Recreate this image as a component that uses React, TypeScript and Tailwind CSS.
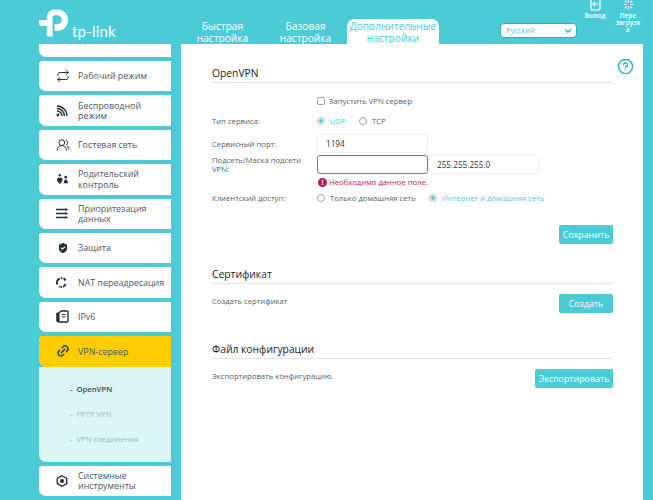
import React from "react";
import { CircleHelp, ChevronDown, Repeat, UsersRound, ShieldCheck, Link2 } from "lucide-react";

const Txt = "font-['Open_Sans',sans-serif]";

function Logo() {
  return (
    <div className="flex items-start ml-[39px] mt-[8px] w-[120px]">
      <svg width="33" height="30" viewBox="0 0 34 30" className="shrink-0">
        <path d="M8 12 V9 A8 8 0 0 1 16 1 H19 A11 11 0 0 1 19 23 H16 V16 H19 A4.5 4.5 0 0 0 19 7 H16 A2 2 0 0 0 14 9 V29 H9 A1 1 0 0 1 8 28 V18 H3 A3 3 0 0 1 0 15 V12 Z" fill="#fff" />
      </svg>
      <span className="font-['Lato',sans-serif] text-white text-[15px] leading-[20px] mt-[13px] tracking-[0.2px]">tp-link</span>
    </div>
  );
}

function Tab({ a, b, active, w }: { a: string; b: string; active?: boolean; w: string }) {
  return (
    <div className={`${w} h-[25px] text-center ${Txt} text-[10.2px] leading-[12px] pt-[1px] rounded-t-[8px] ${active ? "bg-white text-[#4acbd6]" : "text-white"}`}>
      <div>{a}</div>
      <div>{b}</div>
    </div>
  );
}

function Header() {
  return (
    <div className="flex h-[44px] relative">
      <div className="w-[181px] shrink-0"><Logo /></div>
      <div className="flex items-end w-[258px] shrink-0">
        <Tab a="Быстрая" b="настройка" w="w-[83px]" />
        <Tab a="Базовая" b="настройка" w="w-[83px]" />
        <Tab a="Дополнительные" b="настройки" w="w-[92px]" active />
      </div>
      <div className={`ml-[61px] mt-[23px] w-[77px] h-[15px] bg-white border border-[#26b4c1] rounded-[4px] flex items-center justify-between pl-[5px] pr-[3px] text-[7.5px] text-[#4acbd6] ${Txt}`}>
        <span>Русский</span>
        <ChevronDown size={10} strokeWidth={3} className="text-[#26b4c1]" />
      </div>
      <div className={`w-[24px] ml-[6px] text-white font-semibold text-[6.5px] leading-[7px] text-center ${Txt}`}>
        <svg width="12" height="11" viewBox="0 0 12 11" className="mx-auto">
          <path d="M2 0 V8 Q2 10 4 10 H9 Q11 10 11 8 V0" fill="none" stroke="#fff" strokeWidth="1.2" />
          <path d="M9 4 H4 M6 2 L4 4 L6 6" fill="none" stroke="#fff" strokeWidth="1.2" />
        </svg>
        <div className="mt-[1px]">Выход</div>
      </div>
      <div className={`w-[28px] ml-[7px] text-white font-semibold text-[6.5px] leading-[7px] text-center ${Txt}`}>
        <svg width="13" height="11" viewBox="0 0 12 11" className="mx-auto">
          <path d="M6 0 V2.5 M6 6.5 V9 M1.5 4.5 H4 M8 4.5 H10.5 M2.5 1 L4.2 2.7 M9.5 1 L7.8 2.7 M2.5 8 L4.2 6.3 M9.5 8 L7.8 6.3" stroke="#fff" strokeWidth="1.2" />
        </svg>
        <div className="mt-[1px]">Пере</div>
        <div>загрузк</div>
        <div>а</div>
      </div>
    </div>
  );
}

function Card({ icon, text, active }: { icon: React.ReactNode; text: React.ReactNode; active?: boolean }) {
  return (
    <div className={`h-[30.4px] shrink-0 flex items-center rounded-bl-[7px] rounded-tl-[3px] ${active ? "bg-[#ffcc00]" : "bg-white"}`}>
      <div className="w-[39px] pl-[17px] shrink-0 text-[#2c3a44]">{icon}</div>
      <div className={`text-[8.9px] leading-[10.5px] pt-[1px] text-[#4a5860] ${Txt}`}>{text}</div>
    </div>
  );
}

function Wifi() {
  return (
    <svg width="12" height="12" viewBox="0 0 12 12" fill="none">
      <circle cx="2" cy="10" r="1.4" fill="#22303a" />
      <path d="M1 6 A5 5 0 0 1 6 11 M1 3.5 A7.5 7.5 0 0 1 8.5 11 M1 1 A10 10 0 0 1 11 11" stroke="#22303a" strokeWidth="1.4" />
    </svg>
  );
}

function Parent() {
  return (
    <svg width="13" height="11" viewBox="0 0 14 12">
      <path d="M4 2 C5 0.5 7.5 1.5 7 4 C6.7 5.8 5 7.5 4 8.5 C3 7.5 1.3 5.8 1 4 C0.5 1.5 3 0.5 4 2Z" transform="translate(0 2.5)" fill="#22303a" />
      <circle cx="4" cy="1.3" r="1.3" fill="#22303a" />
      <circle cx="10.5" cy="3.5" r="1.5" fill="#22303a" />
      <path d="M8 10 L9.5 6 H11.5 L13.5 10Z" fill="#22303a" />
    </svg>
  );
}

function Qos() {
  return (
    <svg width="12" height="11" viewBox="0 0 12 11">
      <path d="M0 1.5 H10 M0 5.5 H10 M0 9.5 H10" stroke="#22303a" strokeWidth="1.6" />
      <path d="M9.5 0 L12 1.5 L9.5 3Z M9.5 4 L12 5.5 L9.5 7Z M9.5 8 L12 9.5 L9.5 11Z" fill="#22303a" />
    </svg>
  );
}

function Nat() {
  return (
    <svg width="11" height="11" viewBox="0 0 11 11" fill="none">
      <path d="M1.5 7.5 A4.5 4.5 0 0 1 3.5 1.5 M7.5 1.4 A4.5 4.5 0 0 1 9.5 3.5 M9.6 7 A4.5 4.5 0 0 1 7 9.7 M3.8 9.8 L3 9.3" stroke="#22303a" strokeWidth="2" />
      <circle cx="5.5" cy="1" r="1" fill="#22303a" />
      <circle cx="5.3" cy="10" r="1" fill="#22303a" />
    </svg>
  );
}

function Ipv6() {
  return (
    <svg width="13" height="13" viewBox="0 0 13 13" fill="none">
      <path d="M0.8 3 H3 V12 H1.8 A1 1 0 0 1 0.8 11Z" fill="#22303a" stroke="#22303a" strokeWidth="1" />
      <path d="M3 12 H11 A1 1 0 0 0 12 11 V2 A1 1 0 0 0 11 1 H5 L3 3" stroke="#22303a" strokeWidth="1.4" fill="none" />
      <path d="M6 4.5 H9.5 M6 7 H9.5" stroke="#22303a" strokeWidth="1.2" />
    </svg>
  );
}

function Tools() {
  return (
    <svg width="12" height="12" viewBox="0 0 13 13">
      <path d="M6.5 0.8 L11.6 3.6 V9.4 L6.5 12.2 L1.4 9.4 V3.6Z" fill="none" stroke="#22303a" strokeWidth="1.5" />
      <circle cx="6.5" cy="6.5" r="2.2" fill="#22303a" />
    </svg>
  );
}

function Sidebar() {
  return (
    <div className="w-[181px] shrink-0 pl-[39px] pr-[10px] h-[456px] overflow-hidden">
      <div className="flex flex-col gap-[4px]">
        <div className="h-[13px] bg-white rounded-bl-[7px] shrink-0" />
        <Card icon={<Repeat size={14} strokeWidth={1.7} color="#22303a" />} text="Рабочий режим" />
        <Card icon={<Wifi />} text={<>Беспроводной<br />режим</>} />
        <Card icon={<UsersRound size={14} strokeWidth={1.7} color="#22303a" />} text="Гостевая сеть" />
        <Card icon={<Parent />} text={<>Родительский<br />контроль</>} />
        <Card icon={<Qos />} text={<>Приоритезация<br />данных</>} />
        <Card icon={<ShieldCheck size={14} strokeWidth={2} color="#fff" fill="#22303a" />} text="Защита" />
        <Card icon={<Nat />} text="NAT переадресация" />
        <Card icon={<Ipv6 />} text="IPv6" />
        <div className="shrink-0">
          <Card active icon={<Link2 size={14} strokeWidth={2.4} color="#22303a" className="-rotate-45" />} text="VPN-сервер" />
          <div className={`h-[95px] bg-[#dcf5f7] rounded-bl-[7px] pl-[31px] pt-[17px] flex flex-col gap-[15.4px] text-[7.7px] leading-[10px] ${Txt}`}>
            <div className="text-[#3d4a52] font-semibold">-&nbsp;&nbsp;OpenVPN</div>
            <div className="text-[#a9b6bb]">-&nbsp;&nbsp;PPTP VPN</div>
            <div className="text-[#a9b6bb]">-&nbsp;&nbsp;VPN соединения</div>
          </div>
        </div>
        <Card icon={<Tools />} text={<>Системные<br />инструменты</>} />
      </div>
    </div>
  );
}

function Section({ title, mt }: { title: string; mt: string }) {
  return (
    <div className={`${mt} h-[18px] border-b border-[#e3e3e3] text-[10.3px] leading-[16px] text-[#222] ${Txt}`}>{title}</div>
  );
}

function Btn({ children, w }: { children: React.ReactNode; w: string }) {
  return <div className={`${w} h-[19px] bg-[#4acbd6] rounded-[2px] text-white text-[8.9px] leading-[19px] text-center ${Txt}`}>{children}</div>;
}

function Radio({ on }: { on?: boolean }) {
  return (
    <span className={`w-[8px] h-[8px] rounded-full border flex items-center justify-center shrink-0 ${on ? "border-[#b5c2c6]" : "border-[#9aa4a8]"}`}>
      {on && <span className="w-[4px] h-[4px] rounded-full bg-[#4acbd6]" />}
    </span>
  );
}

function Label({ children }: { children: React.ReactNode }) {
  return <div className="w-[105px] shrink-0">{children}</div>;
}

function Main() {
  const row = `flex items-center text-[7.7px] leading-[10px] text-[#555f66] ${Txt}`;
  return (
    <div className="w-[462px] h-[456px] bg-white pl-[31px] pr-[30px] relative overflow-hidden">
      <CircleHelp size={17} strokeWidth={2} color="#26b4c1" className="absolute right-[9px] top-[14px]" />
      <Section title="OpenVPN" mt="mt-[21px]" />
      <div className={`${row} mt-[12px] h-[12px]`}>
        <Label>{""}</Label>
        <span className="w-[8px] h-[8px] border border-[#9aa4a8] rounded-[2px] mr-[4px]" />
        <span>Запустить VPN сервер</span>
      </div>
      <div className={`${row} mt-[8px] h-[12px]`}>
        <Label>Тип сервиса:</Label>
        <Radio on />
        <span className="ml-[5px] text-[#4acbd6] w-[29px]">UDP</span>
        <Radio />
        <span className="ml-[5px]">TCP</span>
      </div>
      <div className={`${row} mt-[7px] h-[19px]`}>
        <Label>Сервисный порт:</Label>
        <div className="w-[111px] h-[19px] border border-[#eceff0] rounded-[4px] pl-[8px] text-[8.2px] leading-[17px] text-[#333]">1194</div>
      </div>
      <div className={`${row} mt-[2px] h-[19px]`}>
        <div className="w-[105px] shrink-0 leading-[9px]">Подсеть/Маска подсети<br />VPN:</div>
        <div className="w-[111px] h-[19px] border border-[#e0447f] rounded-[3px]" />
        <div className="w-[111px] h-[19px] border border-[#eceff0] rounded-[4px] pl-[8px] text-[8.2px] leading-[17px] text-[#333]">255.255.255.0</div>
      </div>
      <div className={`${row} mt-[2px] h-[12px]`}>
        <Label>{""}</Label>
        <span className="w-[9px] h-[9px] rounded-full bg-[#c2185b] text-white text-[7px] leading-[9px] text-center font-bold mr-[2px] ml-[1px]">!</span>
        <span className="text-[#c2185b]">Необходимо данное поле.</span>
      </div>
      <div className={`${row} mt-[4px] h-[12px]`}>
        <Label>Клиентский доступ:</Label>
        <Radio />
        <span className="ml-[5px] w-[99px] whitespace-nowrap">Только домашняя сеть</span>
        <Radio on />
        <span className="ml-[5px] text-[#4acbd6]">Интернет и домашняя сеть</span>
      </div>
      <div className="flex justify-end mt-[21px]"><Btn w="w-[54px]">Сохранить</Btn></div>
      <Section title="Сертификат" mt="mt-[22px]" />
      <div className={`flex justify-between mt-[10px] items-start text-[7.7px] leading-[10px] text-[#555f66] ${Txt}`}>
        <span className="mt-[2px]">Создать сертификат</span>
        <Btn w="w-[54px]">Создать</Btn>
      </div>
      <Section title="Файл конфигурации" mt="mt-[28px]" />
      <div className={`flex justify-between mt-[10px] items-start text-[7.7px] leading-[10px] text-[#555f66] ${Txt}`}>
        <span className="mt-[2px]">Экспортировать конфигурацию.</span>
        <Btn w="w-[78px]">Экспортировать</Btn>
      </div>
    </div>
  );
}

export default function App() {
  return (
    <div className="w-[653px] h-[500px] bg-[#4acbd6] overflow-hidden">
      <Header />
      <div className="flex">
        <Sidebar />
        <Main />
      </div>
    </div>
  );
}
